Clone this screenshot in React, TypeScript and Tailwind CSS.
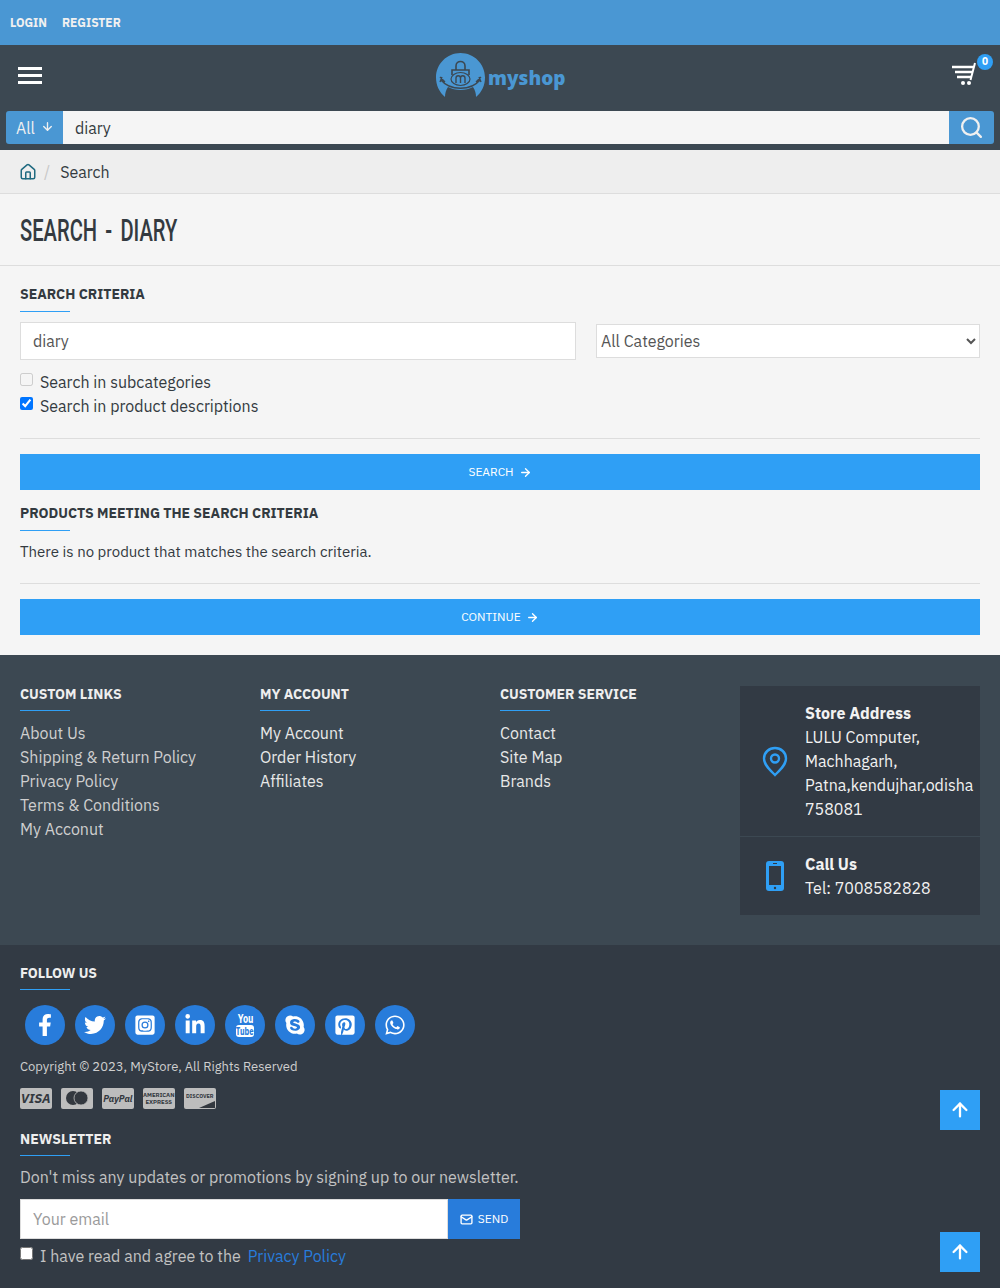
import React from "react";
import { ArrowDown, ArrowRight, ArrowUp, Home, Mail, Search } from "lucide-react";
import {
  FaFacebookF,
  FaTwitter,
  FaInstagramSquare,
  FaLinkedinIn,
  FaSkype,
  FaPinterestSquare,
  FaWhatsapp,
} from "react-icons/fa";

const font = { fontFamily: '"IBM Plex Sans", "Noto Sans", Roboto, sans-serif' };

const Heading = ({ children, light }: { children: React.ReactNode; light?: boolean }) => (
  <div className="mb-[10px]">
    <h3 className={`text-[14px] leading-[18px] font-bold ${light ? "text-[#eeeeee]" : "text-[#333a40]"}`}>
      {children}
    </h3>
    <div className={`${light ? "mt-[7px]" : "mt-[8px]"} w-[50px] h-px bg-[#2f9ff5]`} />
  </div>
);

const Logo = () => (
  <div className="flex items-center gap-[2px]">
    <svg width="50" height="46" viewBox="0 0 50 46">
      <path
        d="M9 44C3 39 0 32 0 24.5C0 11 11 0 24.5 0C38 0 49 11 49 24.5C49 32 46 39 40 44C40 40 39 37 37 34C30 38 19 38 12 34C10 37 9 40 9 44Z"
        fill="#4a97d3"
      />
      <path d="M4 24L9 29M4 29L6 24M5 27C14 38 35 38 44 27M45 24L40 29M45 29L43 24" fill="none" stroke="#3c4852" strokeWidth="1.4" />
      <path d="M16 22V17H33V22" fill="none" stroke="#3c4852" strokeWidth="1.6" />
      <path d="M20 17V13C20 7 29 7 29 13V17" fill="none" stroke="#3c4852" strokeWidth="1.6" />
      <ellipse cx="24.5" cy="26" rx="9.5" ry="6.5" fill="#4a97d3" stroke="#3c4852" strokeWidth="1.2" />
      <path d="M20 30V25C20 22 24.5 22 24.5 25V30M24.5 25C24.5 22 29 22 29 25V30" fill="none" stroke="#3c4852" strokeWidth="1.4" />
    </svg>
    <span className="text-[#4a97d3] text-[19px] font-extrabold leading-none mt-[5px]" style={{ fontFamily: '"Open Sans", sans-serif' }}>
      myshop
    </span>
  </div>
);

const Cart = () => (
  <div className="relative w-[26px] h-[24px] mb-[14px]">
    <svg width="27" height="24" viewBox="0 0 27 24" className="absolute left-0 top-0">
      <path d="M0 5H22M3 10H20.5M5 15H19" stroke="#fff" strokeWidth="2.4" fill="none" />
      <path d="M18.5 18L23 1" stroke="#fff" strokeWidth="2" fill="none" />
      <circle cx="11" cy="21" r="2" fill="#fff" />
      <circle cx="17" cy="21" r="2" fill="#fff" />
    </svg>
    <span className="absolute -top-[8px] -right-[15px] w-[16px] h-[16px] rounded-full bg-[#2f9ff5] text-white text-[10px] leading-[16px] text-center font-bold">
      0
    </span>
  </div>
);

const socials = [
  <FaFacebookF size={22} />,
  <FaTwitter size={22} />,
  <FaInstagramSquare size={22} />,
  <FaLinkedinIn size={22} />,
  <div className="flex flex-col items-center">
    <span className="text-[12px] leading-[10px] font-bold scale-x-[0.75]">You</span>
    <span className="mt-[1px] w-[18px] h-[12px] bg-white rounded-[3px] text-[#287cdb] text-[11px] leading-[12px] font-bold flex justify-center">
      <span className="inline-block scale-x-[0.7]">Tube</span>
    </span>
  </div>,
  <FaSkype size={22} />,
  <FaPinterestSquare size={22} />,
  <FaWhatsapp size={22} />,
];

const Pay = ({ children }: { children: React.ReactNode }) => (
  <div className="relative w-[31.5px] h-[21px] rounded-[2px] bg-[#bdbdbd] flex items-center justify-center overflow-hidden text-[#33383f]">
    {children}
  </div>
);

const links = [
  { title: "CUSTOM LINKS", items: ["About Us", "Shipping & Return Policy", "Privacy Policy", "Terms & Conditions", "My Acconut"], color: "text-[#cfcfcf]" },
  { title: "MY ACCOUNT", items: ["My Account", "Order History", "Affiliates"], color: "text-[#e8e8e8]" },
  { title: "CUSTOMER SERVICE", items: ["Contact", "Site Map", "Brands"], color: "text-[#e8e8e8]" },
];

export default function App() {
  return (
    <div className="relative w-[1000px] h-[1288px] overflow-hidden bg-[#f5f5f5] text-[16px] text-[#333a40]" style={font}>
      {/* top bar */}
      <div className="h-[45px] bg-[#4a97d3] flex items-center gap-[15px] pl-[10px] pt-[1px] text-[12px] font-bold text-[#f0f0f0]">
        <span>LOGIN</span>
        <span>REGISTER</span>
      </div>

      {/* header */}
      <div className="h-[105px] bg-[#3c4852] px-[6px] pt-[6px]">
        <div className="relative h-[60px] flex items-center justify-between pl-[12px] pr-[16px]">
          <div className="flex flex-col gap-[4px] w-[24px] mb-[11px]">
            <div className="h-[3px] bg-white" />
            <div className="h-[3px] bg-white" />
            <div className="h-[3px] bg-white" />
          </div>
          <div className="absolute left-[430px] top-[2px]">
            <Logo />
          </div>
          <Cart />
        </div>
        <div className="flex h-[33px]">
          <div className="w-[57px] bg-[#4a97d3] rounded-l-[3px] flex items-center gap-[6px] pl-[10px] text-[#f0f0f0]">
            All <ArrowDown size={13} strokeWidth={2.5} className="mb-[3px]" />
          </div>
          <div className="flex-1 bg-[#f5f5f5] pl-[12px] leading-[35px]">diary</div>
          <div className="w-[45px] bg-[#4a97d3] rounded-r-[3px] flex items-center justify-center text-[#f0f0f0]">
            <Search size={25} strokeWidth={2.2} />
          </div>
        </div>
      </div>

      {/* breadcrumb */}
      <div className="h-[44px] bg-[#eeeeee] border-b border-[#dddddd] flex items-center pl-[19px]">
        <Home size={18} className="text-[#1f6a80]" />
        <span className="ml-[7px] mr-[10px] text-[#c8c8c8]">/</span>
        <span>Search</span>
      </div>

      {/* title */}
      <div className="h-[72px] border-b border-[#dddddd] pl-[20px] pt-[4px] flex items-center">
        <h1
          className="text-[31px] font-medium text-[#333a40] whitespace-nowrap origin-left scale-x-[0.65] [word-spacing:5px]"
          style={{ fontFamily: "Roboto, sans-serif" }}
        >
          SEARCH - DIARY
        </h1>
      </div>

      {/* content */}
      <div className="px-[20px] pt-[19px] h-[389px]">
        <Heading>SEARCH CRITERIA</Heading>
        <div className="flex items-center gap-[20px]">
          <input
            readOnly
            value="diary"
            className="w-[556px] h-[38px] bg-white border border-[#dddddd] pl-[12px] text-[#555555]"
          />
          <select className="flex-1 h-[34px] bg-white border border-[#dddddd] text-[#555555]">
            <option>All Categories</option>
          </select>
        </div>
        <div className="mt-[10px] flex flex-col">
          <label className="flex items-center gap-[7px] h-[24px]">
            <input type="checkbox" disabled className="w-[13px] h-[13px] mb-[6px]" />
            Search in subcategories
          </label>
          <label className="flex items-center gap-[7px] h-[24px]">
            <input type="checkbox" defaultChecked className="w-[13px] h-[13px] mb-[6px]" />
            Search in product descriptions
          </label>
        </div>
        <div className="mt-[20px] border-t border-[#dddddd]" />
        <button className="mt-[15px] w-full h-[36px] bg-[#2f9ff5] text-white text-[12px] flex items-center justify-center gap-[5px]">
          SEARCH <ArrowRight size={13} strokeWidth={2.5} />
        </button>
        <div className="mt-[14px]">
          <Heading>PRODUCTS MEETING THE SEARCH CRITERIA</Heading>
        </div>
        <p className="text-[15px] leading-[20px] mt-[11px]">There is no product that matches the search criteria.</p>
        <div className="mt-[21px] border-t border-[#dddddd]" />
        <button className="mt-[15px] w-full h-[36px] bg-[#2f9ff5] text-white text-[12px] flex items-center justify-center gap-[5px]">
          CONTINUE <ArrowRight size={13} strokeWidth={2.5} />
        </button>
      </div>

      {/* footer links */}
      <div className="h-[290px] bg-[#3c4852] pt-[30px] pl-[20px] pr-[20px] flex">
        {links.map((col) => (
          <div key={col.title} className="w-[240px]">
            <Heading light>{col.title}</Heading>
            <ul className={`mt-[10px] ${col.color}`}>
              {col.items.map((item) => (
                <li key={item} className="leading-[24px]">{item}</li>
              ))}
            </ul>
          </div>
        ))}
        <div className="w-[240px] h-[229px] mt-[1px] bg-[#323a44] text-[#f2f2f2]">
          <div className="h-[151px] border-b border-[#3c4852] flex items-center">
            <div className="w-[65px] pl-[5px] flex justify-center text-[#2f9ff5]">
              <svg width="26" height="31" viewBox="0 0 26 31" fill="none" stroke="currentColor" strokeWidth="2.4">
                <path d="M13 29C8 24 2 19 2 12.5C2 6.5 7 2 13 2C19 2 24 6.5 24 12.5C24 19 18 24 13 29Z" />
                <circle cx="13" cy="12.5" r="4" />
              </svg>
            </div>
            <div className="leading-[24px] whitespace-nowrap">
              <div className="font-bold">Store Address</div>
              LULU Computer,<br />Machhagarh,<br />Patna,kendujhar,odisha<br />758081
            </div>
          </div>
          <div className="flex items-center h-[78px]">
            <div className="w-[65px] pl-[5px] flex justify-center">
              <svg width="18" height="30" viewBox="0 0 18 30">
                <rect width="18" height="30" rx="3" fill="#2f9ff5" />
                <rect x="3" y="5" width="12" height="19" fill="#323a44" />
                <circle cx="9" cy="27" r="1.2" fill="#323a44" />
                <rect x="7" y="2" width="4" height="1" fill="#323a44" />
              </svg>
            </div>
            <div className="leading-[24px]">
              <div className="font-bold">Call Us</div>
              Tel: 7008582828
            </div>
          </div>
        </div>
      </div>

      {/* footer bottom */}
      <div className="h-[343px] bg-[#323a44] pl-[20px] pt-[19px] text-[#cfcfcf]">
        <Heading light>FOLLOW US</Heading>
        <div className="flex gap-[10px] pl-[5px] mt-[15px]">
          {socials.map((icon, i) => (
            <div key={i} className="w-[40px] h-[40px] rounded-full bg-[#287cdb] text-white flex items-center justify-center">
              {icon}
            </div>
          ))}
        </div>
        <p className="text-[13px] leading-[18px] mt-[13px]">Copyright © 2023, MyStore, All Rights Reserved</p>
        <div className="flex gap-[9.5px] mt-[12px]">
          <Pay><span className="text-[13px] font-extrabold italic">VISA</span></Pay>
          <Pay>
            <svg width="24" height="15" viewBox="0 0 24 15">
              <circle cx="8" cy="7" r="7" fill="#33383f" />
              <circle cx="16" cy="7" r="7" fill="#33383f" stroke="#bdbdbd" strokeWidth="0.8" />
            </svg>
          </Pay>
          <Pay><span className="text-[9px] font-bold italic">PayPal</span></Pay>
          <Pay><span className="text-[6px] font-bold leading-[7px] text-center">AMERICAN EXPRESS</span></Pay>
          <Pay>
            <span className="text-[5.5px] font-bold mb-[4px]">DISCOVER</span>
            <svg width="16" height="7" viewBox="0 0 16 7" className="absolute right-[1px] bottom-[1px]">
              <path d="M0 7L16 0V7Z" fill="#33383f" />
            </svg>
          </Pay>
        </div>
        <div className="mt-[21px]">
          <Heading light>NEWSLETTER</Heading>
        </div>
        <p className="-mt-[1px] leading-[24px] text-[#c2c2c2]">Don't miss any updates or promotions by signing up to our newsletter.</p>
        <div className="flex w-[500px] h-[40px] mt-[10px]">
          <input
            readOnly
            placeholder="Your email"
            className="flex-1 min-w-0 bg-white border border-[#dddddd] pl-[12px] placeholder:text-[#9a9a9a]"
          />
          <div className="w-[72px] bg-[#287cdb] text-white text-[12px] flex items-center justify-center gap-[5px]">
            <Mail size={13} strokeWidth={2.5} /> SEND
          </div>
        </div>
        <label className="flex items-center h-[24px] mt-[5px] text-[#c2c2c2]">
          <input type="checkbox" className="w-[13px] h-[13px] mb-[6px] mr-[7px]" />
          I have read and agree to the
          <span className="ml-[7px] text-[#287cdb]">Privacy Policy</span>
        </label>
      </div>

      {/* scroll to top buttons */}
      <div className="absolute left-[940px] top-[1090px] w-[40px] h-[40px] bg-[#2f9ff5] text-white flex items-center justify-center">
        <ArrowUp size={22} strokeWidth={2.5} />
      </div>
      <div className="absolute left-[940px] top-[1232px] w-[40px] h-[40px] bg-[#2f9ff5] text-white flex items-center justify-center">
        <ArrowUp size={22} strokeWidth={2.5} />
      </div>
    </div>
  );
}
